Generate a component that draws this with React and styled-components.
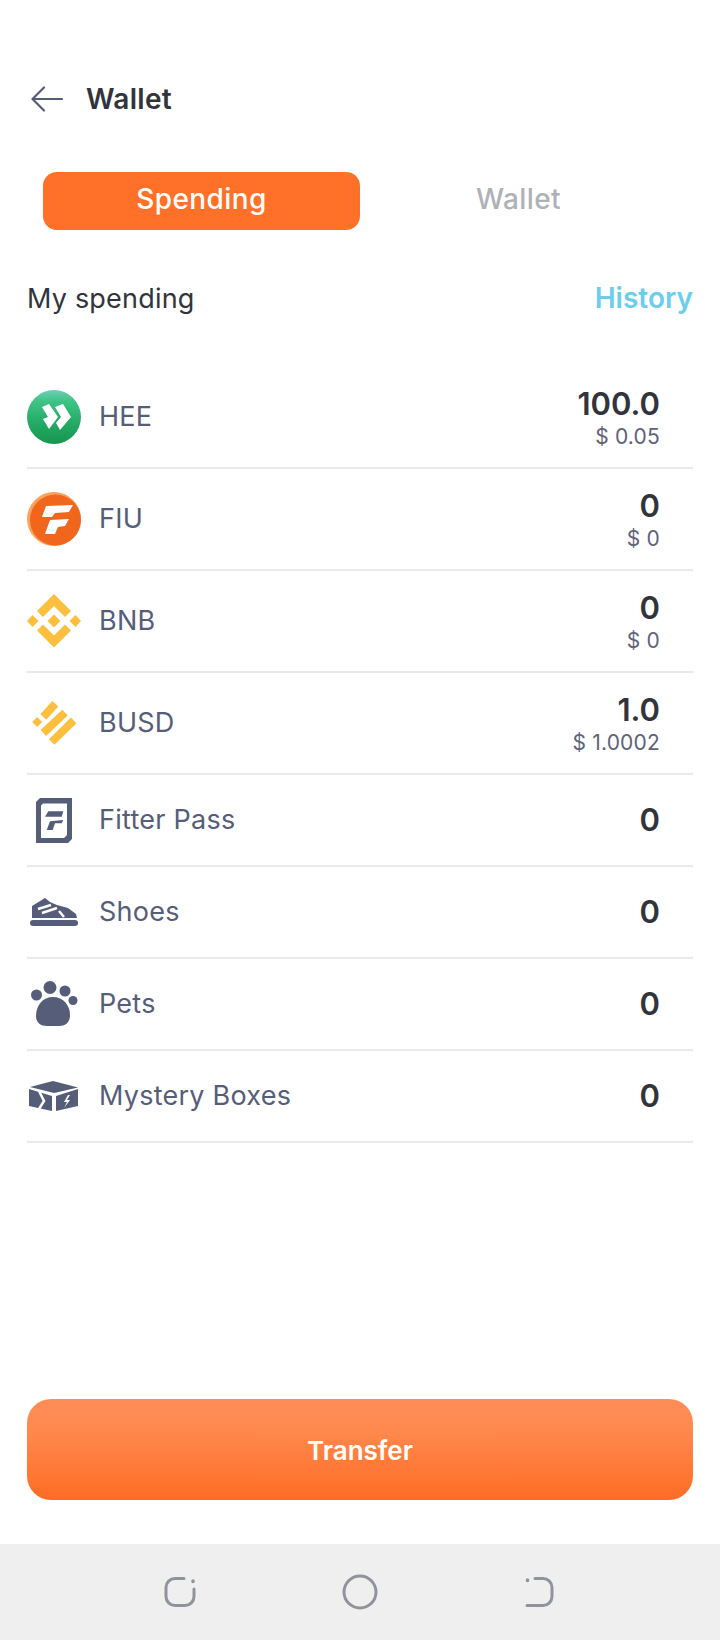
import React from "react";
import styled, { createGlobalStyle } from "styled-components";

const Global = createGlobalStyle`
  html, body { margin: 0; padding: 0; background: #fff; }
  * { box-sizing: border-box; }
  body { font-family: Inter, "Noto Sans", "Liberation Sans", sans-serif; }
`;

const Page = styled.div`
  width: 720px;
  height: 1640px;
  padding-top: 72px;
  display: flex;
  flex-direction: column;
  background: #fff;
`;
const Header = styled.header`
  height: 54px;
  padding-left: 31px;
  display: flex;
  align-items: center;
  gap: 23px;
`;
const Title = styled.h1`
  margin: 0;
  font-size: 28px;
  font-weight: 600;
  letter-spacing: 0.3px;
  color: #31343d;
`;
const Tabs = styled.div`
  margin: 46px 43px 0;
  height: 58px;
  display: grid;
  grid-template-columns: 317px 317px;
`;
const Tab = styled.div`
  display: flex;
  align-items: center;
  justify-content: center;
  padding-bottom: 4px;
  border-radius: 14px;
  font-size: 28px;
  font-weight: 500;
  letter-spacing: 0.4px;
  background: ${p => (p.$active ? "#ff7028" : "transparent")};
  color: ${p => (p.$active ? "#fff" : "#aeb1b8")};
`;
const SectionHead = styled.div`
  margin: 48px 27px 0 27px;
  height: 40px;
  display: flex;
  align-items: center;
  justify-content: space-between;
`;
const SectionTitle = styled.span`
  font-size: 27px;
  font-weight: 400;
  letter-spacing: 0.2px;
  color: #31343d;
`;
const HistoryLink = styled.span`
  font-size: 28px;
  font-weight: 600;
  color: #6ccdec;
`;
const List = styled.div`
  margin: 49px 27px 0 27px;
`;
const Row = styled.div`
  height: ${p => (p.$tall ? "102px" : "92px")};
  padding-right: 33px;
  display: flex;
  align-items: center;
  border-bottom: 2px solid #e9eaeb;
`;
const IconSlot = styled.div`
  width: 72px;
  padding-left: ${p => p.$inset || 0}px;
  display: flex;
  align-items: center;
  flex: none;
  svg { display: block; }
`;
const Label = styled.span`
  flex: 1;
  padding-bottom: 2px;
  font-size: 27px;
  font-weight: 400;
  letter-spacing: 0.25px;
  color: #565d78;
`;
const Values = styled.div`
  display: flex;
  flex-direction: column;
  align-items: flex-end;
`;
const Amount = styled.span`
  font-size: 31px;
  line-height: 36px;
  font-weight: 600;
  color: #31343d;
`;
const Usd = styled.span`
  margin: 2px 0 -2px;
  font-size: 21px;
  line-height: 26px;
  font-weight: 400;
  letter-spacing: 0.2px;
  color: #5e637a;
`;
const Spacer = styled.div`
  flex: 1;
`;
const TransferButton = styled.button`
  margin: 0 27px 44px 27px;
  padding: 2px 0 0;
  height: 101px;
  border: 0;
  border-radius: 24px;
  background: linear-gradient(180deg, #ff8d57 0%, #ff8b52 25%, #ff6c24 100%);
  color: #fff;
  font: 600 26px Inter, "Noto Sans", sans-serif;
`;
const NavBar = styled.nav`
  height: 96px;
  background: #efefef;
  display: grid;
  grid-template-columns: 1fr 1fr 1fr;
  padding: 0 90px;
  align-items: center;
  justify-items: center;
  svg { display: block; }
`;

const HeeIcon = () => (
  <svg width="54" height="54" viewBox="0 0 54 54">
    <defs>
      <linearGradient id="hee" x1="0" y1="0" x2="0" y2="1">
        <stop offset="0" stopColor="#6fcdb7" />
        <stop offset=".2" stopColor="#3fc487" />
        <stop offset=".65" stopColor="#22a862" />
        <stop offset="1" stopColor="#169650" />
      </linearGradient>
    </defs>
    <circle cx="27" cy="27" r="27" fill="url(#hee)" />
    <path d="M15 17l7-3 9 13-9 12-6-10 5-2z" fill="#fff" />
    <path d="M28 17l8-3 8 13-11 13-4-7 5-6z" fill="#fff" />
  </svg>
);
const FiuIcon = () => (
  <svg width="54" height="54" viewBox="0 0 54 54">
    <circle cx="27" cy="27" r="27" fill="#fca25a" />
    <circle cx="28.500" cy="28" r="25.500" fill="#f0661c" />
    <path d="M15 25l4-11 27-1-4 7-14 1-3 4z" fill="#fff" />
    <path d="M18 42l5-14 19-1-4 7-7 1-3 7z" fill="#fff" />
  </svg>
);
const BnbIcon = () => (
  <svg width="54" height="54" viewBox="0 0 54 54" fill="#fdbf3e">
    <path d="M27 0l17 17-6 6-11-11-11 11-6-6z" />
    <path d="M27 53.500l17-17-6-6-11 11-11-11-6 6z" />
    <path d="M27 20.500l6.500 6.500-6.500 6.500-6.500-6.500z" />
    <path d="M5.500 21l6 6-6 6-5.500-6z" />
    <path d="M48.500 21l5.500 6-5.500 6-6-6z" />
  </svg>
);
const BusdIcon = () => (
  <svg width="44" height="46" viewBox="0 0 44 46" stroke="#fdbf3e" strokeWidth="8" fill="none">
    <path d="M11.300 17L23.300 3.700" />
    <path d="M11.300 33L33 12.700" />
    <path d="M19.700 42L41.700 20.300" />
    <path d="M5.200 17l5 5-5 5-5-5z" fill="#fdbf3e" stroke="none" />
  </svg>
);
const PassIcon = () => (
  <svg width="36" height="45" viewBox="0 0 36 45" fill="#565d78">
    <path fillRule="evenodd" d="M4 0h32v41l-4 4H0V4zM7 5.500L5 7.500V40h23l3-3V5.500z" />
    <path d="M9 18.700l3.300-5.400h15l-1.600 5.400z" />
    <path d="M10.700 32l3.300-8.700 13.300-1.300-1.600 3.300H19L16.700 32z" />
  </svg>
);
const ShoeIcon = () => (
  <svg width="48" height="28" viewBox="0 0 48 28" fill="#565d78">
    <path d="M2 8L15 0l5 4 7 3 11 3 8 6 1 4H2z" />
    <rect x="0" y="22" width="48" height="6" rx="3" />
    <path d="M8 11l13-4M12 15l15-5M29 13l5 6" stroke="#fff" strokeWidth="2.500" fill="none" />
  </svg>
);
const PawIcon = () => (
  <svg width="48" height="46" viewBox="0 0 48 46" fill="#565d78">
    <circle cx="6.500" cy="14" r="5.500" />
    <circle cx="20" cy="6.500" r="6.500" />
    <circle cx="35" cy="10" r="5.500" />
    <circle cx="43" cy="19.500" r="4.500" />
    <path d="M23 16c10 0 17 8 17 18 0 8-5 11-11 11H17c-6 0-11-3-11-10 0-11 7-19 17-19z" />
  </svg>
);
const BoxIcon = () => (
  <svg width="50" height="30" viewBox="0 0 50 30" fill="#565d78">
    <path d="M24 0l25 6.500L25 12 1 6z" />
    <path d="M0 8l23 7v15L0 25z" />
    <path d="M27 15l22-7v17l-22 5z" />
    <path d="M10 10l5 10-5 8" stroke="#fff" strokeWidth="2.500" fill="none" />
    <path d="M39 14l-4 7h3l-3 6 6-8h-3l3-5z" fill="#fff" />
  </svg>
);

const rows = [
  { name: "HEE", icon: <HeeIcon />, amount: "100.0", usd: "$ 0.05", tall: true },
  { name: "FIU", icon: <FiuIcon />, amount: "0", usd: "$ 0", tall: true },
  { name: "BNB", icon: <BnbIcon />, amount: "0", usd: "$ 0", tall: true },
  { name: "BUSD", icon: <BusdIcon />, inset: 5, amount: "1.0", usd: "$ 1.0002", tall: true },
  { name: "Fitter Pass", icon: <PassIcon />, inset: 9, amount: "0" },
  { name: "Shoes", icon: <ShoeIcon />, inset: 3, amount: "0" },
  { name: "Pets", icon: <PawIcon />, inset: 3, amount: "0" },
  { name: "Mystery Boxes", icon: <BoxIcon />, inset: 2, amount: "0" },
];

export default function App() {
  return (
    <Page>
      <Global />
      <Header>
        <svg width="32" height="26" viewBox="0 0 32 26" fill="none" stroke="#565d78" strokeWidth="2.200" strokeLinecap="round" strokeLinejoin="round">
          <path d="M31 13H1.500M13 1.500L1.500 13 13 24.500" />
        </svg>
        <Title>Wallet</Title>
      </Header>
      <Tabs>
        <Tab $active>Spending</Tab>
        <Tab>Wallet</Tab>
      </Tabs>
      <SectionHead>
        <SectionTitle>My spending</SectionTitle>
        <HistoryLink>History</HistoryLink>
      </SectionHead>
      <List>
        {rows.map(r => (
          <Row key={r.name} $tall={r.tall}>
            <IconSlot $inset={r.inset}>{r.icon}</IconSlot>
            <Label>{r.name}</Label>
            <Values>
              <Amount>{r.amount}</Amount>
              {r.usd && <Usd>{r.usd}</Usd>}
            </Values>
          </Row>
        ))}
      </List>
      <Spacer />
      <TransferButton>Transfer</TransferButton>
      <NavBar>
        <svg width="34" height="32" viewBox="0 0 34 32" fill="none" stroke="#909399" strokeWidth="3" strokeLinecap="round">
          <path d="M21 2.500H12a9 9 0 0 0-9 9v9a9 9 0 0 0 9 9h10a9 9 0 0 0 9-9V13" />
          <path d="M30 5v.500" strokeWidth="3.500" />
        </svg>
        <svg width="36" height="36" viewBox="0 0 36 36" fill="none" stroke="#909399" strokeWidth="3">
          <circle cx="18" cy="18" r="16" />
        </svg>
        <svg width="30" height="32" viewBox="0 0 30 32" fill="none" stroke="#909399" strokeWidth="3" strokeLinecap="round">
          <path d="M10 2.500h8a9 9 0 0 1 9 9v9a9 9 0 0 1-9 9H2" />
          <path d="M2.500 4v.500" strokeWidth="3.500" />
        </svg>
      </NavBar>
    </Page>
  );
}
